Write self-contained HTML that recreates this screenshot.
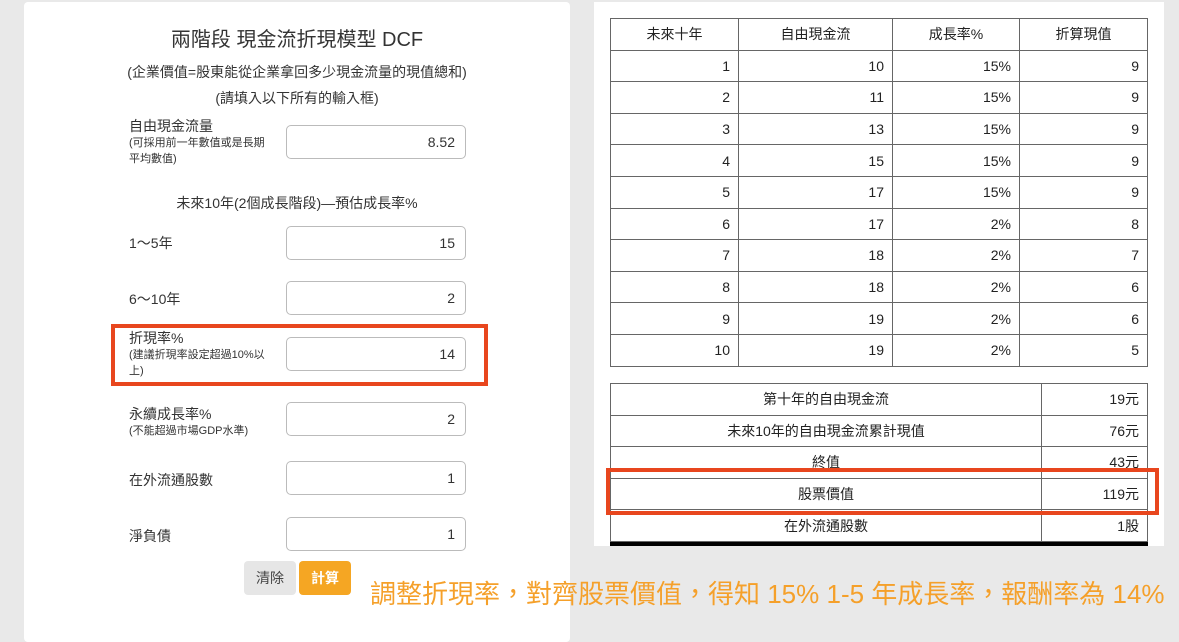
<!DOCTYPE html>
<html><head><meta charset="utf-8"><style>
*{box-sizing:border-box;margin:0;padding:0}
body{width:1179px;height:621px;background:#e9e9e9;position:relative;overflow:hidden;font-family:"Liberation Sans","Noto Sans CJK TC",sans-serif;color:#333}
.abs{position:absolute}
.lp{left:24px;top:2px;width:546px;height:640px;background:#fff;border-radius:4px}
.rp{left:594px;top:2px;width:570px;height:544px;background:#fff}
.t{left:24px;width:546px;text-align:center}
.lab{left:129px;font-size:14px;line-height:18px}
.lab small{display:block;font-size:11px;line-height:16px}
.inp{left:286px;width:180px;height:34px;border:1px solid #bbb;border-radius:5px;text-align:right;padding-right:10px;font-size:14px;line-height:32px}
table{position:absolute;border-collapse:collapse;font-size:14px;color:#222}
td,th{border:1px solid #666;height:31.6px;padding:0 8px;font-weight:normal}
td{text-align:right}
th{text-align:center}
.box{border:4px solid #e8461e}
</style></head><body>
<div class="abs lp"></div>
<div class="abs rp"></div>
<div class="abs t" style="top:26px;font-size:20px;line-height:28px;color:#333">兩階段 現金流折現模型 DCF</div>
<div class="abs t" style="top:62px;font-size:14px;line-height:20px">(企業價值=股東能從企業拿回多少現金流量的現值總和)</div>
<div class="abs t" style="top:88px;font-size:14px;line-height:20px">(請填入以下所有的輸入框)</div>

<div class="abs lab" style="top:117px">自由現金流量<small>(可採用前一年數值或是長期<br>平均數值)</small></div>
<div class="abs inp" style="top:125px">8.52</div>
<div class="abs t" style="top:193px;font-size:14px;line-height:20px">未來10年(2個成長階段)—預估成長率%</div>
<div class="abs lab" style="top:234px">1～5年</div>
<div class="abs inp" style="top:226px">15</div>
<div class="abs lab" style="top:290px">6～10年</div>
<div class="abs inp" style="top:281px">2</div>
<div class="abs lab" style="top:329px">折現率%<small>(建議折現率設定超過10%以<br>上)</small></div>
<div class="abs inp" style="top:337px">14</div>
<div class="abs lab" style="top:405px">永續成長率%<small>(不能超過市場GDP水準)</small></div>
<div class="abs inp" style="top:402px">2</div>
<div class="abs lab" style="top:471px">在外流通股數</div>
<div class="abs inp" style="top:461px">1</div>
<div class="abs lab" style="top:527px">淨負債</div>
<div class="abs inp" style="top:517px">1</div>
<div class="abs" style="left:244px;top:561px;width:52px;height:34px;background:#e6e6e6;border-radius:4px;text-align:center;line-height:34px;font-size:14px;color:#444">清除</div>
<div class="abs" style="left:299px;top:561px;width:52px;height:34px;background:#f5a623;border-radius:4px;text-align:center;line-height:34px;font-size:14px;color:#fff;font-weight:bold">計算</div>
<div class="abs box" style="left:111px;top:324px;width:377px;height:62px"></div>

<table style="left:610px;top:18px;width:538px">
<tr><th style="width:128px">未來十年</th><th style="width:154px">自由現金流</th><th style="width:127px">成長率%</th><th>折算現值</th></tr>
<tr><td>1</td><td>10</td><td>15%</td><td>9</td></tr>
<tr><td>2</td><td>11</td><td>15%</td><td>9</td></tr>
<tr><td>3</td><td>13</td><td>15%</td><td>9</td></tr>
<tr><td>4</td><td>15</td><td>15%</td><td>9</td></tr>
<tr><td>5</td><td>17</td><td>15%</td><td>9</td></tr>
<tr><td>6</td><td>17</td><td>2%</td><td>8</td></tr>
<tr><td>7</td><td>18</td><td>2%</td><td>7</td></tr>
<tr><td>8</td><td>18</td><td>2%</td><td>6</td></tr>
<tr><td>9</td><td>19</td><td>2%</td><td>6</td></tr>
<tr><td>10</td><td>19</td><td>2%</td><td>5</td></tr>
</table>
<table style="left:610px;top:383px;width:538px">
<tr><th style="width:431px">第十年的自由現金流</th><td>19元</td></tr>
<tr><th>未來10年的自由現金流累計現值</th><td>76元</td></tr>
<tr><th>終值</th><td>43元</td></tr>
<tr><th>股票價值</th><td>119元</td></tr>
<tr><th>在外流通股數</th><td>1股</td></tr>
<tr><th style="height:8px;background:#000;border-color:#000"></th><td style="height:8px;background:#000;border-color:#000"></td></tr>
</table>
<div class="abs" style="left:594px;top:546px;width:580px;height:30px;background:#e9e9e9"></div>
<div class="abs box" style="left:606px;top:468px;width:553px;height:47px"></div>
<div class="abs" style="left:370px;top:578px;font-size:26px;line-height:32px;color:#f5a02a;white-space:nowrap">調整折現率，對齊股票價值，得知 15% 1-5 年成長率，報酬率為 14%</div>
</body></html>
